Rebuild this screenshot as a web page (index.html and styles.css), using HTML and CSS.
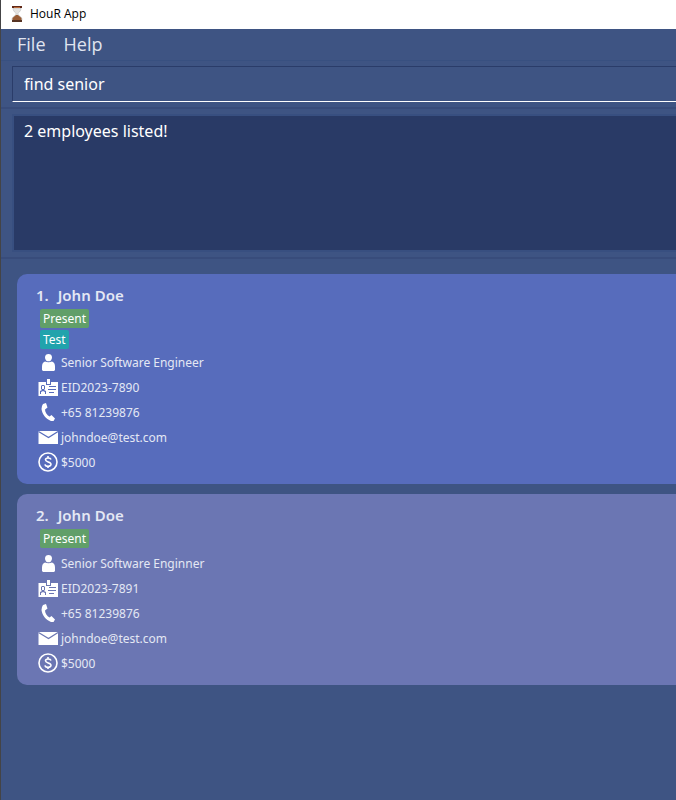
FILE: index.html
```html
<!DOCTYPE html>
<html lang="en">
<head>
<meta charset="utf-8">
<title>HouR App</title>
<link rel="stylesheet" href="styles.css">
</head>
<body>
<svg class="symbols" aria-hidden="true">
  <symbol id="person" viewBox="0 0 20 20"><path d="M10.500 2C8.500 2 7 3.200 7 5.300C7 7 7.800 8.400 9 9.200H12C13.200 8.400 14 7 14 5.300C14 3.200 12.500 2 10.500 2ZM7 9.500C5 10.300 4 12 4 14.500V18L5 19H16L17 18V14.500C17 12 16 10.300 14 9.500C12 10.500 9 10.500 7 9.500Z"/></symbol>
  <symbol id="badge" viewBox="0 0 20 20"><path fill-rule="evenodd" d="M9 2H12V7H9ZM0.500 5H8V8H13V5H20V19H0.500ZM11 9V10H18V9ZM10 12V13H18V12ZM11 15V16H16V15ZM4 8L3 9V12L4 13L2 14V17H3V15L5 14L7 15V17H8V14L6 13L7 12V9L6 8ZM4 9H6V12H4Z"/></symbol>
  <symbol id="phone" viewBox="0 0 20 20"><path d="M4 4L5 2L8 1L9.500 5.500L7 7.500C7 10 9 13 11.500 14.500L13.500 13L17 16.500L15.500 19H13C8 17 4 12 3.500 7Z"/></symbol>
  <symbol id="mail" viewBox="0 0 20 20"><path d="M0.500 4H20V17H0.500Z"/><path d="M0.500 4.500L10.500 10.500L20 4.500" fill="none" stroke="var(--card)" stroke-width="1.200"/></symbol>
  <symbol id="money" viewBox="0 0 20 20"><g fill="none" stroke="currentColor" stroke-width="1.600"><circle cx="10" cy="10" r="9"/><path d="M13 7.500C12.500 5.500 7.500 5.200 7.500 7.800C7.500 10.300 13 9.500 13 12.200C13 15 7.300 14.700 7 12.300M10 4V6M10 14V16"/></g></symbol>
</svg>
<div class="window">
  <header class="titlebar">
    <svg class="hourglass" viewBox="0 0 16 18" aria-hidden="true">
      <path d="M4 3H12C12 7 9 7 9 9S13 11 13 15H3C3 11 7 11 7 9S4 7 4 3Z" fill="#e4e2df" stroke="#bbb" stroke-width="0.600"/>
      <path d="M7 10H9L12.500 13V15H3.500V13Z" fill="#985c35"/>
      <path d="M3 1H13V3H3Z" fill="#602817"/><path d="M5 2H11V3H5Z" fill="#b96a3a"/><path d="M3 15H13V17H3Z" fill="#563323"/>
    </svg>
    <span>HouR App</span>
  </header>
  <nav class="menu"><button type="button">File</button><button type="button">Help</button></nav>
  <div class="command"><input type="text" value="find senior" aria-label="Command"></div>
  <section class="result"><output>2 employees listed!</output></section>
  <main class="list">
    <article class="card">
      <h2><span>1.</span><span>John Doe</span></h2>
      <div class="tags"><span class="tag">Present</span><span class="tag team">Test</span></div>
      <ul>
        <li><svg><use href="#person"/></svg><span>Senior Software Engineer</span></li>
        <li><svg><use href="#badge"/></svg><span>EID2023-7890</span></li>
        <li><svg><use href="#phone"/></svg><span>+65 81239876</span></li>
        <li><svg><use href="#mail"/></svg><span>johndoe@test.com</span></li>
        <li><svg><use href="#money"/></svg><span>$5000</span></li>
      </ul>
    </article>
    <article class="card alternate">
      <h2><span>2.</span><span>John Doe</span></h2>
      <div class="tags"><span class="tag">Present</span></div>
      <ul>
        <li><svg><use href="#person"/></svg><span>Senior Software Enginner</span></li>
        <li><svg><use href="#badge"/></svg><span>EID2023-7891</span></li>
        <li><svg><use href="#phone"/></svg><span>+65 81239876</span></li>
        <li><svg><use href="#mail"/></svg><span>johndoe@test.com</span></li>
        <li><svg><use href="#money"/></svg><span>$5000</span></li>
      </ul>
    </article>
  </main>
</div>
</body>
</html>
```

FILE: styles.css
```css
* { box-sizing: border-box; }
body { margin: 0; font-family: "Noto Sans", "Open Sans", sans-serif; }
.symbols { position: absolute; width: 0; height: 0; }
.window {
  display: flex;
  flex-direction: column;
  min-height: 100vh;
  border-left: 1px solid #444446;
  background: #3e5483;
  color: #e4e8f4;
}
.titlebar {
  display: flex;
  align-items: center;
  gap: 5px;
  height: 29px;
  padding: 0 8px 2px;
  background: #fff;
  color: #000;
  font: 12px "Open Sans", sans-serif;
}
.hourglass { width: 16px; height: 18px; }
.menu {
  display: flex;
  gap: 18px;
  height: 32px;
  padding: 0 16px;
  border-bottom: 1px solid #385080;
}
.menu button {
  padding: 0;
  border: 0;
  background: none;
  color: #e0e4ef;
  font: 18px/31px "Open Sans", sans-serif;
}
.command {
  padding: 5px 0 5px 11px;
  border-bottom: 2px solid #384c7b;
}
.command input {
  display: block;
  width: 100%;
  height: 36px;
  padding: 0 11px;
  border: 1px solid #2a3c69;
  border-right: 0;
  border-bottom-color: #fff;
  border-radius: 0;
  outline: 0;
  background: transparent;
  color: #fff;
  font: 16px "Noto Sans", sans-serif;
}
.result {
  padding: 5px 0 5px 11px;
  border-bottom: 2px solid #384c7b;
}
.result output {
  display: block;
  height: 138px;
  padding: 3px 10px;
  border: 2px solid #384f80;
  border-right: 0;
  background: #293a66;
  color: #fff;
  font-size: 16px;
  line-height: 24px;
}
.list {
  display: flex;
  flex-direction: column;
  gap: 10px;
  padding: 15px 0 15px 16px;
}
.card {
  --card: #576cbc;
  padding: 10px 19px 9px;
  border-radius: 10px 0 0 10px;
  background: var(--card);
}
.alternate { --card: #6b76b3; }
h2 {
  display: flex;
  gap: 9px;
  margin: 0;
  padding-bottom: 2px;
  font: 600 15px/23px "Noto Sans", sans-serif;
}
.tags {
  display: flex;
  flex-direction: column;
  align-items: flex-start;
  gap: 2px;
  min-height: 22px;
  padding: 0 4px 1px;
}
.tag {
  padding: 0 3px;
  border-radius: 2px;
  background: #619f69;
  color: #fff;
  font-size: 12px;
  line-height: 19px;
}
.team { background: #21a3ac; }
ul { margin: 0; padding: 0 2px; list-style: none; }
li {
  display: flex;
  align-items: flex-start;
  gap: 3px;
  height: 25px;
  font-size: 12px;
  line-height: 25px;
}
li svg { width: 20px; height: 20px; margin-top: 2px; fill: #fff; color: #fff; }
```
